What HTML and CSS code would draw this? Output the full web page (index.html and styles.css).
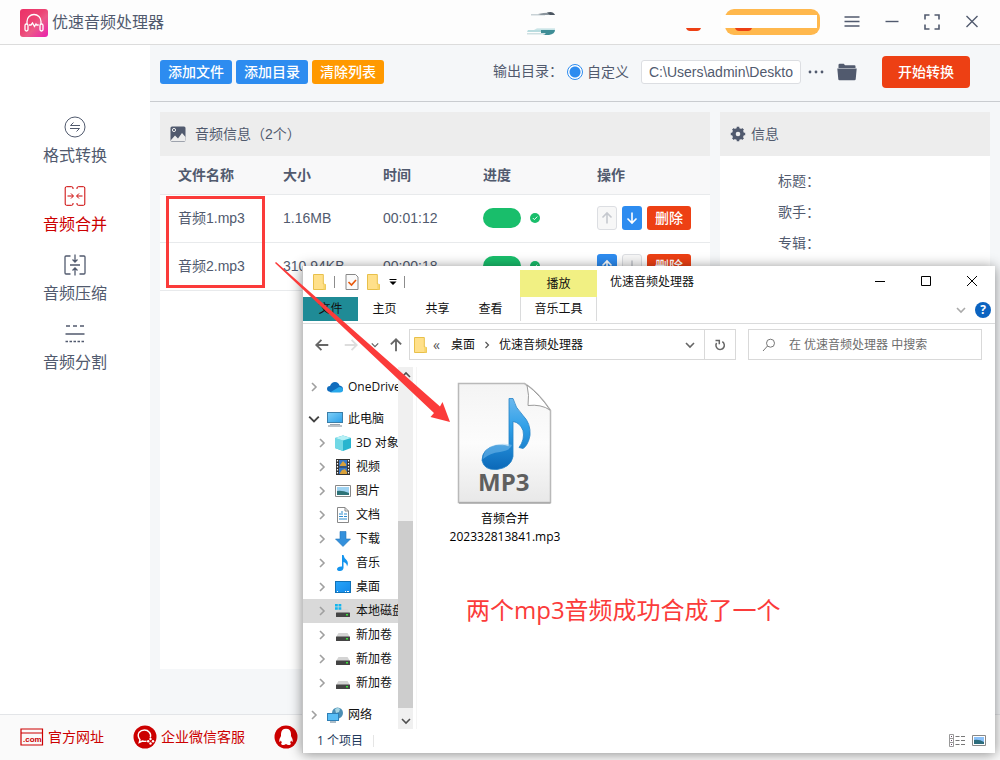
FILE: index.html
```html
<!DOCTYPE html>
<html lang="zh-CN">
<head>
<meta charset="utf-8">
<meta name="viewport" content="width=device-width, initial-scale=1">
<title>优速音频处理器</title>
<link rel="stylesheet" href="styles.css">
</head>
<body>
<svg class="defs" width="0" height="0" aria-hidden="true">
  <defs>
    <linearGradient id="g-logo" x1="0" y1="0" x2="1" y2="1"><stop offset="0" stop-color="#ec3067"/><stop offset=".45" stop-color="#ec4474"/><stop offset=".6" stop-color="#ec5a87"/><stop offset="1" stop-color="#ea20b0"/></linearGradient>
    <linearGradient id="g-page" x1="0" y1="0" x2="0" y2="1"><stop offset="0" stop-color="#f4f4f4"/><stop offset=".5" stop-color="#fcfcfc"/><stop offset="1" stop-color="#e8e8e8"/></linearGradient>
    <linearGradient id="g-note" x1="0" y1="0" x2="0" y2="1"><stop offset="0" stop-color="#6bb8ee"/><stop offset=".4" stop-color="#2fa0e8"/><stop offset="1" stop-color="#0b68b8"/></linearGradient>
    <linearGradient id="g-pc" x1="0" y1="0" x2="1" y2="1"><stop offset="0" stop-color="#7fd0f8"/><stop offset="1" stop-color="#2b9fe8"/></linearGradient>
    <linearGradient id="g-desk" x1="0" y1="0" x2="1" y2="1"><stop offset="0" stop-color="#27a5fa"/><stop offset="1" stop-color="#1489e8"/></linearGradient>
  </defs>
  <symbol id="i-folder" viewBox="0 0 14 16"><path d="M.5.5h9.800v9.500l2.200.5v5H.5z" fill="#ffe08a" stroke="#e8c04a"/><path d="M10.300 10h2.200v5.500h-2.200z" fill="#f7d56c"/></symbol>
  <symbol id="i-right" viewBox="0 0 8 10"><path d="M2 1l4 4-4 4" fill="none" stroke="#a0a0a0" stroke-width="1.600"/></symbol>
  <symbol id="i-down" viewBox="0 0 10 8"><path d="M1 2l4 4 4-4" fill="none" stroke="currentColor" stroke-width="1.600"/></symbol>
  <symbol id="i-arrow" viewBox="0 0 14 14"><path d="M7 12.500V2M2.500 6.500L7 2l4.500 4.500" fill="none" stroke="currentColor" stroke-width="1.600"/></symbol>
  <symbol id="i-disk" viewBox="0 0 16 16"><path d="M3.500 6h9L15 10H1z" fill="#d4d4d4"/><rect x="1" y="9.500" width="14" height="4.500" rx=".6" fill="#444"/><rect x="11" y="11" width="2" height="1.500" fill="#3be23b"/></symbol>
  <symbol id="i-check" viewBox="0 0 10 10"><circle cx="5" cy="5" r="5" fill="#19be6b"/><path d="M2.800 5l1.600 1.600 2.900-3" fill="none" stroke="#fff" stroke-width=".9"/></symbol>
</svg>

<div class="app">
  <header class="topbar">
    <svg class="logo" viewBox="0 0 28 28"><rect width="28" height="28" rx="3" fill="url(#g-logo)"/><g fill="none" stroke="#fff" stroke-width="1.300"><path d="M7 15v-2.500a7 7 0 0114 0V15M9 16h2l1.500-2 2 3.500 1.500-2.500.7 1h2"/><rect x="5" y="15" width="3" height="7" rx="1.400"/><rect x="20" y="15" width="3" height="7" rx="1.400"/></g></svg>
    <span class="brand">优速音频处理器</span>
    <svg class="promo" viewBox="0 0 296 28" aria-hidden="true"><path d="M6 5h14v1.500H6z" fill="#c9d2d6"/><path d="M13 5q9-2 13-1l4 2H16z" fill="#8b959d"/><path d="M22 3.500q6-2 8 2.500h-5z" fill="#4c5661"/><path d="M3 21h13v2H2z" fill="#b9dcdf"/><path d="M12 19.500h18v1.200H9z" fill="#b9dcdf"/><path d="M16 21h14q0 4-6 5h-6l3-2h-5z" fill="#3f8d96"/><path d="M2 24h18v1.500H2z" fill="#cfe0e2"/><path d="M161 19h15q-1 3-4 3h-7q-3 0-4-3z" fill="#ed4014"/><rect x="200" y="0" width="95" height="26" rx="9" fill="#ffb84d"/><path d="M196 6h96v13h-96z" fill="#fff"/><path d="M210 19h17q-1 3-4 3h-9q-3 0-4-3z" fill="#ed4014"/></svg>
    <div class="controls">
      <button aria-label="菜单"><svg viewBox="0 0 16 16"><path d="M.5 3h15M.5 7.500h15M.5 12h15"/></svg></button>
      <button aria-label="最小化"><svg viewBox="0 0 16 16"><path d="M1.500 7.500h13"/></svg></button>
      <button aria-label="全屏"><svg viewBox="0 0 16 16"><path d="M1 5.500V1h4.500M10.500 1H15v4.500M15 10.500V15h-4.500M5.500 15H1v-4.500" stroke-width="1.600"/></svg></button>
      <button aria-label="关闭"><svg viewBox="0 0 16 16"><path d="M2.500 2l11 11M13.500 2l-11 11"/></svg></button>
    </div>
  </header>

  <div class="body">
    <nav class="side">
      <a href="#convert"><svg viewBox="0 0 24 24"><circle cx="12" cy="12" r="10" stroke-width="1"/><path d="M17 10.500H7.500l3-3M7 13.500h9.500l-3 3" stroke-width="1"/></svg>格式转换</a>
      <a href="#merge" class="active"><svg viewBox="0 0 24 24"><path d="M10 5V4q0-1.300-1.300-1.300H3.500Q2.200 2.700 2.200 4v16q0 1.300 1.300 1.300h5.200Q10 21.300 10 20v-1M14 5V4q0-1.300 1.300-1.300h5.200q1.300 0 1.300 1.300v16q0 1.300-1.300 1.300h-5.200Q14 21.300 14 20v-1M4.500 12H10M8 9.500l2.500 2.500L8 14.500M19.500 12H14M16 9.500L13.500 12l2.500 2.500" stroke-width="1"/></svg>音频合并</a>
      <a href="#compress"><svg viewBox="0 0 24 24"><path d="M7.500 3H3q-1 0-1 1v16q0 1 1 1h4.500M16.500 3H21q1 0 1 1v16q0 1-1 1h-4.500M7 12h10M12 1.500v7M9.500 6.500L12 9l2.500-2.500M12 22.500v-7M9.500 17.500L12 15l2.500 2.500" stroke-width="1.300"/></svg>音频压缩</a>
      <a href="#split"><svg viewBox="0 0 24 24"><path d="M3 4h4M10 4h4M17 4h4M2.500 12h19" stroke-width="1.400"/><path d="M2.500 19.500h19" stroke-width="1.400" stroke-dasharray="2.500 1.500"/></svg>音频分割</a>
    </nav>

    <main class="main">
      <div class="toolbar">
        <button class="btn">添加文件</button>
        <button class="btn">添加目录</button>
        <button class="btn btn-warn">清除列表</button>
        <div class="output">
          <span class="out-label">输出目录：</span>
          <label class="radio"><input type="radio" name="out" checked>自定义</label>
          <input class="path" type="text" aria-label="输出目录" value="C:\Users\admin\Desktop">
          <button class="plain dots" aria-label="更多"><svg viewBox="0 0 16 4"><circle cx="2" cy="2" r="1.400"/><circle cx="8" cy="2" r="1.400"/><circle cx="14" cy="2" r="1.400"/></svg></button>
          <button class="plain open" aria-label="打开目录"><svg viewBox="0 0 20 18"><path d="M1.500 4V2q0-1.300 1.300-1.300h4L8 2.200h9.500q1 0 1 1V5h-17zM.3 5.500h19.400l-1 10.700q-.1 1.100-1.200 1.100h-15q-1.100 0-1.200-1.100z"/></svg></button>
          <button class="start">开始转换</button>
        </div>
      </div>

      <div class="panels">
        <section class="panel">
          <h2 class="panel-head"><svg viewBox="0 0 16 16"><rect x=".5" y=".5" width="15" height="15" rx="1.500" fill="#515a6e"/><circle cx="4" cy="4" r="1.600" fill="none" stroke="#ededed"/><path d="M1 14l4-4.500 3 3L12 7l3.500 4V15H1z" fill="#ededed"/></svg>音频信息（2个）</h2>
          <table class="files">
            <colgroup><col class="c-name"><col class="c-mid"><col class="c-mid"><col class="c-prog"><col></colgroup>
            <thead><tr><th>文件名称</th><th>大小</th><th>时间</th><th>进度</th><th>操作</th></tr></thead>
            <tbody>
              <tr><td>音频1.mp3</td><td>1.16MB</td><td>00:01:12</td>
                <td><div class="prog"><span class="bar"></span><svg viewBox="0 0 10 10"><use href="#i-check"/></svg></div></td>
                <td><div class="ops"><button class="mv" disabled aria-label="上移"><svg viewBox="0 0 14 14"><use href="#i-arrow"/></svg></button><button class="mv" aria-label="下移"><svg class="flip" viewBox="0 0 14 14"><use href="#i-arrow"/></svg></button><button class="del">删除</button></div></td></tr>
              <tr><td>音频2.mp3</td><td>310.94KB</td><td>00:00:18</td>
                <td><div class="prog"><span class="bar"></span><svg viewBox="0 0 10 10"><use href="#i-check"/></svg></div></td>
                <td><div class="ops"><button class="mv" aria-label="上移"><svg viewBox="0 0 14 14"><use href="#i-arrow"/></svg></button><button class="mv" disabled aria-label="下移"><svg class="flip" viewBox="0 0 14 14"><use href="#i-arrow"/></svg></button><button class="del">删除</button></div></td></tr>
            </tbody>
          </table>
        </section>
        <section class="panel info">
          <h2 class="panel-head"><svg viewBox="0 0 16 16"><circle cx="8" cy="8" r="4.200" fill="none" stroke="#515a6e" stroke-width="3.600"/><path d="M8 .8v14.400M.8 8h14.400M2.900 2.900l10.200 10.200M13.100 2.900L2.900 13.100" stroke="#515a6e" stroke-width="2.600"/><circle cx="8" cy="8" r="2.300" fill="#ededed"/></svg>信息</h2>
          <ul class="meta"><li>标题：</li><li>歌手：</li><li>专辑：</li></ul>
        </section>
      </div>
    </main>
  </div>

  <footer class="foot">
    <a href="#site"><svg viewBox="0 0 24 24"><path d="M1 4h21.500v16H1zM1 8h21.500" fill="none" stroke="#c00" stroke-width="1.200"/><text x="3" y="17" class="com">.com</text></svg>官方网址</a>
    <a href="#wecom"><svg viewBox="0 0 24 24"><circle cx="12" cy="12" r="11.500" fill="#c00"/><g fill="none" stroke="#fff" stroke-width="1.400"><path d="M17.300 12.500q1-3-1-5.300Q14.500 5 11.500 5 8 5 6 7.500 4 11 7 14.800L6.300 17.500 9.300 16q2 .6 4.200.2"/></g><g fill="#fff"><circle cx="17.500" cy="14" r="1.200"/><circle cx="20" cy="16.300" r="1.200"/><circle cx="17.500" cy="18.500" r="1.200"/><circle cx="15.200" cy="16.200" r="1.200"/></g></svg>企业微信客服</a>
    <a href="#qq" aria-label="QQ"><svg viewBox="0 0 24 24"><circle cx="12" cy="12" r="11.500" fill="#c00"/><path d="M12 3.800q4.800 0 5 5.200v2q2.200 3.500 1.800 5.500-.7.700-1.700-1l-.9 2q1.500 1.500 0 2.200-2.500.6-4.200-.7-1.700 1.300-4.200.7-1.500-.7 0-2.200l-.9-2q-1 1.700-1.700 1Q4.800 14.500 7 11V9q.2-5.200 5-5.200z" fill="#fff"/></svg></a>
  </footer>

  <section class="win" aria-label="文件资源管理器">
    <div class="ribbon">
      <div class="rb-left">
        <div class="quick">
          <svg class="fold" viewBox="0 0 14 16"><use href="#i-folder"/></svg><i class="sep"></i>
          <svg class="tick" viewBox="0 0 14 16"><path d="M1 .5h9.500L13 3v12.500H1z" fill="#fafafa" stroke="#888"/><path d="M3.500 8l3 3 4.500-5" fill="none" stroke="#e8590c" stroke-width="1.700"/></svg>
          <svg class="fold" viewBox="0 0 14 16"><use href="#i-folder"/></svg>
          <svg class="caret" viewBox="0 0 8 8"><path d="M.5 1h7v1h-7zM.5 3.500h7L4 7z"/></svg><i class="sep"></i>
        </div>
        <div class="tabs"><button class="file">文件</button><button>主页</button><button>共享</button><button>查看</button></div>
      </div>
      <div class="context"><span class="play">播放</span><button>音乐工具</button></div>
      <div class="rb-right">
        <div class="title"><span>优速音频处理器</span>
          <div class="wbtns">
            <button aria-label="最小化"><svg viewBox="0 0 12 12"><path d="M1 5.500h10"/></svg></button>
            <button aria-label="最大化"><svg viewBox="0 0 12 12"><path d="M1.500.5h9v9h-9z"/></svg></button>
            <button aria-label="关闭"><svg viewBox="0 0 12 12"><path d="M1 0l10 10M11 0L1 10"/></svg></button>
          </div>
        </div>
        <div class="help"><svg class="chev" viewBox="0 0 10 8"><use href="#i-down"/></svg><button aria-label="帮助">?</button></div>
      </div>
    </div>

    <div class="addr-row">
      <button class="nv" aria-label="后退"><svg viewBox="0 0 14 14" class="left"><use href="#i-arrow"/></svg></button>
      <button class="nv fwd" aria-label="前进"><svg viewBox="0 0 14 14" class="rightw"><use href="#i-arrow"/></svg></button>
      <button class="nv recent" aria-label="最近"><svg viewBox="0 0 10 8"><use href="#i-down"/></svg></button>
      <button class="nv" aria-label="向上"><svg viewBox="0 0 14 14"><use href="#i-arrow"/></svg></button>
      <div class="addr">
        <svg class="fold" viewBox="0 0 14 16"><use href="#i-folder"/></svg>
        <span class="more">«</span><span>桌面</span><svg class="crumb" viewBox="0 0 8 10"><path d="M2.500 2l3 3-3 3" fill="none" stroke="#555" stroke-width="1.200"/></svg><span>优速音频处理器</span>
        <button class="drop" aria-label="展开"><svg viewBox="0 0 10 8"><use href="#i-down"/></svg></button>
        <button class="reload" aria-label="刷新"><svg viewBox="0 0 14 14"><path d="M9.300 3.700A4.200 4.200 0 113.600 5M2.500 2.500h3.800v3.800" fill="none" stroke="#666" stroke-width="1.500"/></svg></button>
      </div>
      <label class="search"><svg viewBox="0 0 14 14"><circle cx="8.500" cy="5.200" r="4" fill="none" stroke="#777"/><path d="M5.500 8L1 13" stroke="#777"/></svg><input type="text" aria-label="搜索" placeholder="在 优速音频处理器 中搜索"></label>
    </div>

    <div class="pane">
      <div class="tree">
        <div class="node"><svg class="tw" viewBox="0 0 8 10"><use href="#i-right"/></svg><svg class="ic" viewBox="0 0 16 16"><path d="M3.500 13Q0 12.500 0 9.800 0 7.200 3 7q1.500-4 5-4 3.500 0 4.500 3.500Q16 7 16 10t-3.500 3z" fill="#0f6cbd"/><path d="M3 13.500L12 8q4 0 4 2.800 0 2.700-3 2.700z" fill="#28a8ea"/></svg>OneDrive</div>
        <div class="node group"><svg class="tw dark" viewBox="0 0 10 8"><use href="#i-down"/></svg><svg class="ic" viewBox="0 0 16 16"><rect x=".5" y="1.500" width="15" height="10" fill="url(#g-pc)" stroke="#3b7ea8"/><path d="M3 13h10v.8H3zM1 14.500h14v1H1z" fill="#7b8794"/></svg>此电脑</div>
        <div class="node sub"><svg class="tw" viewBox="0 0 8 10"><use href="#i-right"/></svg><svg class="ic" viewBox="0 0 16 16"><path d="M0 3l8-2.500L16 3v10l-8 3-8-3z" fill="#29b5cf"/><path d="M0 3l8 2.500v10.500L0 13z" fill="#71d8e5"/><path d="M0 3L8 .5 16 3 8 5.500z" fill="#b6f0f5"/></svg>3D 对象</div>
        <div class="node sub"><svg class="tw" viewBox="0 0 8 10"><use href="#i-right"/></svg><svg class="ic" viewBox="0 0 16 16"><path d="M1 0h14v16H1z" fill="#333"/><path d="M4 1h8v6.500H4z" fill="#3678c8"/><path d="M4 8.500h8V15H4z" fill="#3678c8"/><path d="M5 6l3-4 3 3v2H5zM5 14l2-3 3-1 2 3v2H5z" fill="#d9a13a"/><path d="M2.500 1v15M13.500 1v15" stroke="#fff" stroke-width="1.200" stroke-dasharray="1.500 1.500"/></svg>视频</div>
        <div class="node sub"><svg class="tw" viewBox="0 0 8 10"><use href="#i-right"/></svg><svg class="ic" viewBox="0 0 16 16"><path d="M.5 2.500h15v11H.5z" fill="#fff" stroke="#888"/><path d="M2 4h12v8H2z" fill="#9fd3f2"/><path d="M2 8q5-1 12 2v2H2z" fill="#2e7378"/></svg>图片</div>
        <div class="node sub"><svg class="tw" viewBox="0 0 8 10"><use href="#i-right"/></svg><svg class="ic" viewBox="0 0 16 16"><path d="M2.500.5H10L13.500 4v11.500h-11z" fill="#fff" stroke="#888"/><path d="M10 .5V4h3.500" fill="none" stroke="#888"/><path d="M6 5h2M4 7h4M9 7h3M4 9.500h4M9 9.500h3M4 12h8" stroke="#2d8bd0" stroke-width="1.200"/></svg>文档</div>
        <div class="node sub"><svg class="tw" viewBox="0 0 8 10"><use href="#i-right"/></svg><svg class="ic" viewBox="0 0 16 16"><path d="M5 .5h6V8h4.500L8 15.500.5 8H5z" fill="#3390dc" stroke="#2375bd" stroke-width=".6"/></svg>下载</div>
        <div class="node sub"><svg class="tw" viewBox="0 0 8 10"><use href="#i-right"/></svg><svg class="ic" viewBox="0 0 16 16"><path d="M7 0h1.500q.5 3 3 5 2.500 3 .5 6.500 0-3.500-3.500-4.500V13q-.5 2.800-3.500 3-3 0-3-2 .5-2.800 5-2.500z" fill="#1494ee"/></svg>音乐</div>
        <div class="node sub"><svg class="tw" viewBox="0 0 8 10"><use href="#i-right"/></svg><svg class="ic" viewBox="0 0 16 16"><rect x=".5" y="2.500" width="15" height="11" fill="url(#g-desk)" stroke="#1172b8"/><path d="M2 12.500h1M10 12.500h1M12 12.500h2" stroke="#fff"/></svg>桌面</div>
        <div class="node sub sel"><svg class="tw" viewBox="0 0 8 10"><use href="#i-right"/></svg><svg class="ic" viewBox="0 0 16 16"><use href="#i-disk"/><path d="M0 1h2.800v2.500H0zM3.500 1h2.800v2.500H3.500zM0 4.200h2.800v2.500H0zM3.500 4.200h2.800v2.500H3.500z" fill="#12b5ee"/></svg>本地磁盘</div>
        <div class="node sub"><svg class="tw" viewBox="0 0 8 10"><use href="#i-right"/></svg><svg class="ic" viewBox="0 0 16 16"><use href="#i-disk"/></svg>新加卷</div>
        <div class="node sub"><svg class="tw" viewBox="0 0 8 10"><use href="#i-right"/></svg><svg class="ic" viewBox="0 0 16 16"><use href="#i-disk"/></svg>新加卷</div>
        <div class="node sub"><svg class="tw" viewBox="0 0 8 10"><use href="#i-right"/></svg><svg class="ic" viewBox="0 0 16 16"><use href="#i-disk"/></svg>新加卷</div>
        <div class="node group"><svg class="tw" viewBox="0 0 8 10"><use href="#i-right"/></svg><svg class="ic" viewBox="0 0 16 16"><circle cx="10.500" cy="6" r="5.500" fill="#4c8fb5"/><path d="M8 2q3-2 5 0l-1 3-3 1z" fill="#a7d6e4"/><rect x=".5" y="6.500" width="11" height="7" fill="#58bdf5" stroke="#2f7fb5"/><path d="M3 15h6" stroke="#5c7c92"/></svg>网络</div>
      </div>
      <div class="scroll"><svg class="up" viewBox="0 0 10 8"><use href="#i-down"/></svg><span class="thumb"></span><svg viewBox="0 0 10 8"><use href="#i-down"/></svg></div>
      <div class="files-area">
        <figure class="item">
          <svg viewBox="0 0 96 122"><path d="M1.500 1.500h66q14 9 26 27v92h-92z" fill="url(#g-page)" stroke="#b9b9b9" stroke-width="1.500"/><path d="M2 121h91.500" stroke="#a8a8a8" stroke-width="1.500"/><path d="M70 3q13 10 23 25-9-6-22-4.500 1.500-10-1-20.500z" fill="#fff" stroke="#9c9c9c"/><path d="M52 16.500h4q2 9 10 17 8 8 7 20-2 10-7 13l-4-1q6-8 4-17-3-8-10-9v35q-2 11-16 13-13 1-15-9 0-12 14-15 7-1 13 1z" fill="url(#g-note)" stroke="#2583c6" stroke-width=".8"/><path d="M26 77q1-13 16-15 8-1 13 1-1 5-12 7-10 1-17 7z" fill="#8cc9f3" opacity=".45"/><text x="21" y="109" class="mp3">MP3</text></svg>
          <figcaption>音频合并<br>202332813841.mp3</figcaption>
        </figure>
        <p class="note">两个mp3音频成功合成了一个</p>
      </div>
    </div>

    <div class="status"><span>1 个项目</span><i class="st-sep"></i>
      <button aria-label="详细信息"><svg viewBox="0 0 16 14"><path d="M.5.500h4v12h-4zM.5 4.500h4M.5 8.500h4" fill="none" stroke="#999"/><path d="M6.500 2.500h4M12 2.500h4M6.500 6.500h4M12 6.500h4M6.500 10.500h4M12 10.500h4" stroke="#777"/><path d="M2 2h1v1H2zM2 6h1v1H2zM2 10h1v1H2z" fill="#646"/></svg></button>
      <button aria-label="大图标"><svg viewBox="0 0 16 14"><path d="M1.500 1.500h13v10h-13z" fill="#fff" stroke="#888"/><path d="M3 3h10v7H3z" fill="#8cc2fa"/><path d="M3 6q5-1 10 2v2H3z" fill="#2d6d7c"/></svg></button>
    </div>
  </section>

  <div class="mark-box"></div>
  <svg class="mark-arrow" viewBox="0 0 176 160" aria-hidden="true"><path d="M0 1L1 0l164 144.500 2.500-4.500 7.500 20-19.500-5 3.500-4z" fill="#fb3b3a"/></svg>
</div>
</body>
</html>
```
FILE: styles.css
```css
* { box-sizing: border-box; }
body {
  margin: 0;
  font-family: "Liberation Sans", "Noto Sans CJK SC", sans-serif;
  font-size: 14px;
  line-height: 20px;
  color: #515a6e;
}
button, input { font: inherit; color: inherit; margin: 0; padding: 0; }
button { border: 0; background: none; display: inline-flex; align-items: center; justify-content: center; white-space: nowrap; }
a { color: inherit; text-decoration: none; }
svg { display: block; flex: none; }
.defs { position: absolute; }

.app { position: relative; min-height: 100vh; display: flex; flex-direction: column; background: #fff; overflow: hidden; }

/* header */
.topbar { display: flex; align-items: center; height: 45px; padding: 2px 8px 0 20px; border-bottom: 1px solid #dcdcdc; background: #fdfdfd; }
.logo { width: 28px; height: 28px; margin-right: 4px; }
.brand { font-size: 16px; }
.promo { width: 296px; height: 28px; margin-left: auto; margin-right: 11px; }
.controls { display: flex; align-items: center; height: 40px; }
.controls button { width: 40px; height: 32px; padding-bottom: 2px; }
.controls svg { width: 16px; height: 16px; fill: none; stroke: #515a6e; stroke-width: 1.400; }

/* body */
.body { flex: 1; display: flex; }
.side { width: 150px; padding-top: 70px; display: flex; flex-direction: column; gap: 16px; }
.side a { display: flex; flex-direction: column; align-items: center; gap: 5px; font-size: 16px; line-height: 24px; }
.side svg { width: 24px; height: 24px; fill: none; stroke: currentColor; }
.side .active { color: #c00; }
.main { flex: 1; min-width: 0; background: #f5f7f9; display: flex; flex-direction: column; }

.toolbar { display: flex; align-items: center; gap: 4px; height: 57px; padding: 0 30px 3px 10px; border-bottom: 1px solid #c9ccd0; }
.btn { height: 24px; padding: 0 8px; border-radius: 3px; background: #2d8cf0; color: #fff; font-weight: 500; }
.btn-warn { background: #f90; }
.output { margin-left: auto; display: flex; align-items: center; }
.out-label { width: 74px; padding-bottom: 1px; }
.radio { display: flex; align-items: center; gap: 4px; margin-right: 12px; }
.radio input { appearance: none; width: 16px; height: 16px; border: 1px solid #2d8cf0; border-radius: 50%; background: radial-gradient(circle, #2d8cf0 5px, #fff 6px); }
.path { width: 160px; height: 24px; padding: 0 7px; border: 1px solid #dcdee2; border-radius: 3px; background: #fff; }
.plain svg { fill: #515a6e; }
.dots { margin-left: 7px; }
.dots svg { width: 16px; height: 4px; }
.open { margin: 0 25px 0 13px; }
.open svg { width: 20px; height: 18px; }
.start { width: 88px; height: 32px; border-radius: 4px; background: #ed4014; color: #fff; font-weight: 500; }

/* panels */
.panels { flex: 1; display: flex; gap: 10px; padding: 10px 10px 45px; }
.panel { flex: 1; min-width: 0; background: #fff; }
.info { flex: 0 0 270px; }
.panel-head { margin: 0; height: 44px; display: flex; align-items: center; gap: 9px; padding: 0 10px 1px; background: #ededed; font-size: 14px; font-weight: 400; }
.panel-head svg { width: 16px; height: 16px; }
.info .panel-head { gap: 5px; }
.files { width: 100%; border-collapse: collapse; table-layout: fixed; }
.c-name { width: 105px; }
.c-mid { width: 100px; }
.c-prog { width: 114px; }
.files th, .files td { padding: 0 0 0 18px; text-align: left; border-bottom: 1px solid #e8eaec; white-space: nowrap; }
.files th { height: 38px; background: #f8f8f9; }
.files td { height: 48px; }
.prog { display: flex; align-items: center; gap: 9px; }
.bar { width: 38px; height: 20px; border-radius: 10px; background: #19be6b; }
.prog svg { width: 10px; height: 10px; }
.ops { display: flex; gap: 5px; }
.mv { width: 20px; height: 24px; border-radius: 3px; background: #2d8cf0; color: #fff; }
.mv:disabled { background: #f7f7f7; border: 1px solid #dcdee2; color: #c5c8ce; }
.mv svg { width: 14px; height: 14px; }
.flip { transform: rotate(180deg); }
.del { width: 44px; height: 24px; border-radius: 3px; background: #ed4014; color: #fff; font-weight: 500; }
.meta { list-style: none; margin: 0; padding: 10px 0 0 58px; line-height: 31px; }

/* footer */
.foot { height: 46px; display: flex; align-items: center; gap: 29px; padding: 0 0 1px 20px; border-top: 1px solid #e3e5e8; background: #fafafa; color: #c00; }
.foot a { display: flex; align-items: center; gap: 4px; }
.foot svg { width: 24px; height: 24px; }
.com { font: bold 8px "Liberation Sans", sans-serif; fill: #c00; }

/* explorer window */
.win {
  position: absolute; left: 302px; top: 266px; right: 5px; bottom: 7px;
  display: flex; flex-direction: column;
  border-left: 1px solid #c4c4c4;
  background: #fff; color: #111;
  box-shadow: 0 1px 12px rgba(0, 0, 0, .45);
  font-family: "Open Sans", "Noto Sans CJK SC", sans-serif;
  font-size: 12px; line-height: 18px;
}
.fold { width: 14px; height: 16px; }
.ribbon { display: flex; height: 58px; border-bottom: 1px solid #dadbdc; }
.rb-left { width: 217px; }
.quick { height: 31px; display: flex; align-items: center; padding-left: 10px; }
.sep { width: 1px; height: 12px; margin: 0 10px 0 7px; background: #8c8c8c; }
.tick { width: 14px; height: 16px; margin-right: 8px; }
.caret { width: 8px; height: 8px; margin-left: 8px; }
.tabs { display: flex; }
.tabs button { width: 53px; height: 24px; }
.tabs .file { width: 55px; background: #1f8b96; }
.context { width: 77px; padding-top: 4px; }
.play { display: flex; align-items: center; justify-content: center; height: 27px; background: #f1f083; }
.context button { width: 100%; height: 24px; border: 1px solid #dadbdc; border-width: 0 1px; }
.rb-right { flex: 1; }
.title { height: 31px; display: flex; align-items: center; justify-content: space-between; padding-left: 13px; }
.wbtns { display: flex; }
.wbtns button { width: 46px; height: 30px; }
.wbtns svg { width: 12px; height: 12px; fill: none; stroke: #000; }
.help { display: flex; align-items: center; justify-content: flex-end; gap: 9px; padding: 5px 4px 0 0; }
.chev { width: 10px; height: 8px; color: #aaa; }
.help button { width: 16px; height: 16px; border-radius: 50%; background: #0b63c0; color: #fff; font-weight: 700; }

.addr-row { display: flex; align-items: center; padding: 5px 13px 7px 11px; color: #666; }
.nv svg { width: 16px; height: 16px; }
.left { transform: rotate(-90deg); }
.rightw { transform: rotate(90deg); }
.fwd { margin: 0 12px 0 13px; color: #ddd; }
.nv.recent { margin-right: 9px; }
.nv.recent svg { width: 8px; height: 8px; }
.addr { flex: 1; height: 31px; margin: 0 12px 0 5px; display: flex; align-items: center; padding-left: 4px; border: 1px solid #d9d9d9; color: #111; white-space: nowrap; }
.more { width: 23px; padding-left: 5px; font-size: 14px; color: #555; }
.crumb { width: 8px; height: 10px; margin: 0 8px; }
.drop { margin-left: auto; width: 28px; height: 29px; color: #666; }
.drop svg { width: 10px; height: 8px; }
.reload { width: 31px; height: 29px; border-left: 1px solid #d9d9d9; }
.reload svg { width: 14px; height: 14px; }
.search { width: 234px; height: 31px; display: flex; align-items: center; gap: 13px; padding-left: 13px; border: 1px solid #d9d9d9; }
.search svg { width: 14px; height: 14px; }
.search input { flex: 1; min-width: 0; border: 0; outline: 0; background: none; }
.search input::placeholder { color: #6d6d6d; opacity: 1; }

.pane { flex: 1; min-height: 0; display: flex; }
.tree { width: 95px; padding-top: 8px; overflow: hidden; }
.node { height: 24px; display: flex; align-items: center; gap: 5px; padding-left: 5px; white-space: nowrap; }
.node .tw { width: 12px; height: 10px; margin-right: 2px; }
.node .ic { width: 16px; height: 16px; }
.dark { color: #444; }
.group { margin-top: 8px; }
.sub { padding-left: 13px; }
.sel { background: #d9d9d9; }
.scroll { width: 15px; background: #f0f0f0; color: #505050; display: flex; flex-direction: column; align-items: center; padding: 4px 0; }
.scroll svg { width: 10px; height: 8px; }
.scroll .up { transform: rotate(180deg); }
.thumb { width: 15px; height: 187px; margin: auto 0 9px; background: #cdcdcd; }
.files-area { flex: 1; margin-left: 3px; border-left: 1px solid #f5f5f5; }
.item { width: 116px; margin: 15px 0 0 30px; display: flex; flex-direction: column; align-items: center; text-align: center; }
.item svg { width: 96px; height: 122px; }
.item figcaption { margin-top: 6px; color: #000; }
.mp3 { font: bold 24px "Open Sans", sans-serif; fill: #5f5f5f; }
.note { margin: 46px 0 0 49px; font-size: 24px; line-height: 36px; color: #fb3b3a; white-space: nowrap; }

.status { height: 24px; display: flex; align-items: center; padding: 0 8px 0 14px; gap: 6px; color: #1e395b; }
.st-sep { width: 1px; height: 12px; margin: 0 auto 0 4px; background: #e5e5e5; }
.status svg { width: 16px; height: 14px; }

/* annotations */
.mark-box { position: absolute; left: 166px; top: 196px; width: 99px; height: 92px; border: 3px solid #fb3b3a; }
.mark-arrow { position: absolute; left: 275px; top: 262px; width: 176px; height: 160px; }
```
